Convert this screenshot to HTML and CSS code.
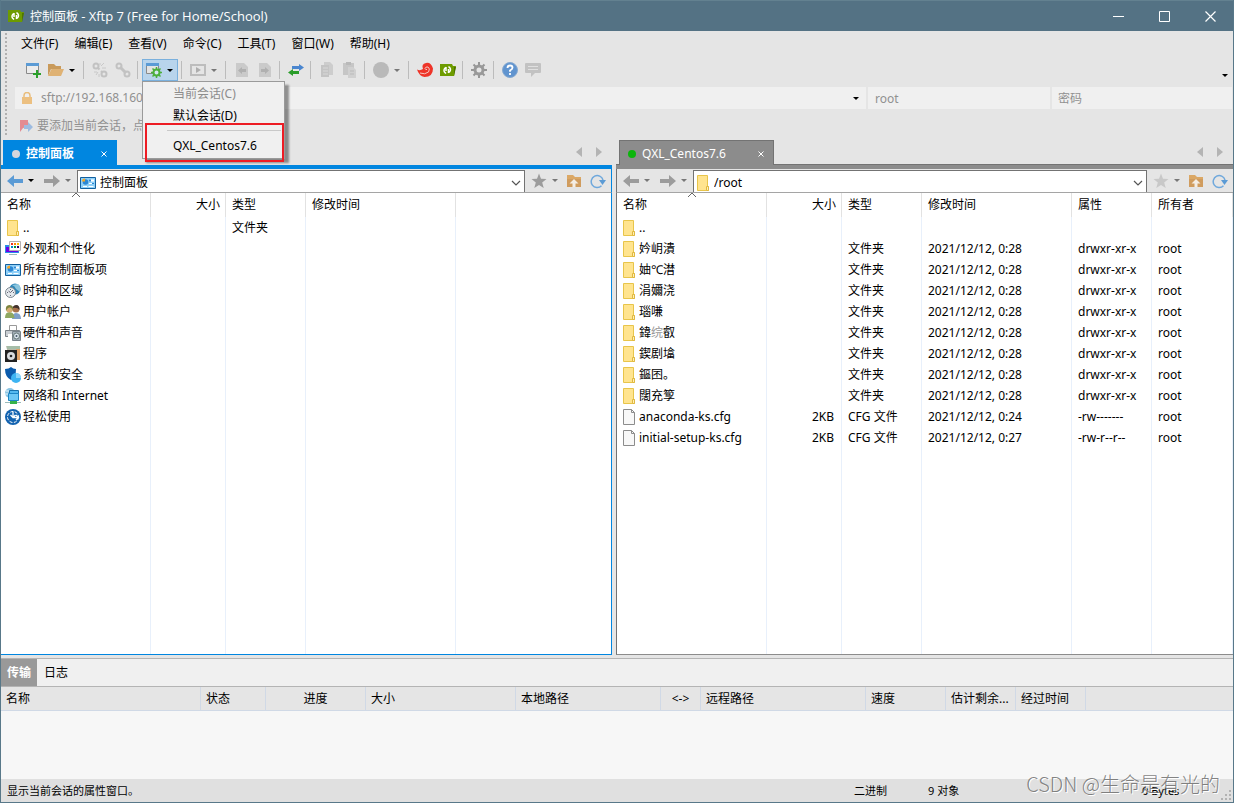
FILE: index.html
```
<!DOCTYPE html>
<html lang="zh-CN">
<head>
<meta charset="utf-8">
<title>控制面板 - Xftp 7 (Free for Home/School)</title>
<link rel="stylesheet" href="styles.css">
</head>
<body>
<svg class="defs" aria-hidden="true">
  <symbol id="folder" viewBox="0 0 14 18"><path d="M1.500 1.500h10v11h1v4h-11z" fill="#ffe48f" stroke="#e8c54a"/><path d="M10.500 12.500h2v4h-2z" fill="#fff0b8" stroke="#e0b840"/></symbol>
  <symbol id="page" viewBox="0 0 14 18"><path d="M1.500 1.500h8l3 3v12h-11z" fill="#f8f8f8" stroke="#8c8c8c"/><path d="M9.500 1.500v3h3" fill="none" stroke="#8c8c8c"/></symbol>
  <symbol id="panel" viewBox="0 0 16 14"><path d="M.5 1.500h15v11H.5z" fill="#8fd0f8" stroke="#12609f"/><circle cx="5.500" cy="6" r="2.800" fill="#2b86d3"/><path d="M5 5.500V2.500a3 3 0 0 0-3 3z" fill="#f6a623"/><path d="M9 3.500h5v2H9zM9 7h5v1H9zM3 10h4v1H3zM8.500 10h5v1h-5z" fill="#fff"/><path d="M9 3.500h2v2H9zM12 7h2v1h-2z" fill="#2b86d3"/></symbol>
  <symbol id="left" viewBox="0 0 16 14"><path d="M0 7l7-6v4h9v4H7v4z" fill="currentColor"/></symbol>
  <symbol id="right" viewBox="0 0 16 14"><path d="M16 7L9 1v4H0v4h9v4z" fill="currentColor"/></symbol>
  <symbol id="down" viewBox="0 0 6 3"><path d="M0 0h6L3 3z" fill="currentColor"/></symbol>
  <symbol id="star" viewBox="0 0 16 16"><path d="M8 .5l2 5.200 5.500.3-4.300 3.500 1.500 5.500L8 12l-4.700 3 1.500-5.500L.5 6 6 5.700z" fill="currentColor"/></symbol>
  <symbol id="upfolder" viewBox="0 0 16 16"><path d="M1 2h6l2 2h6v10H1z" fill="#dba866"/><path d="M1 6h14v8H1z" fill="#d09c5e"/><path d="M8 6l4.500 4.500H9.500V14h-3v-3.500h-3z" fill="#f4ede4"/></symbol>
  <symbol id="refresh" viewBox="0 0 16 16"><path d="M11.500 12.800A6 6 0 1 1 13 7" fill="none" stroke="#6fa8dc" stroke-width="1.500"/><path d="M9 7h7l-3.500 5z" fill="#5b9bd5"/></symbol>
  <symbol id="chev" viewBox="0 0 10 6"><path d="M1 1l4 4 4-4" fill="none" stroke="#555" stroke-width="1.200"/></symbol>
  <symbol id="x" viewBox="0 0 8 8"><path d="M1.500 1.500l5 5m0-5l-5 5" stroke="currentColor" stroke-width="1"/></symbol>
  <symbol id="tril" viewBox="0 0 6 10"><path d="M6 0v10L0 5z" fill="#b4b4b4"/></symbol>
  <symbol id="trir" viewBox="0 0 6 10"><path d="M0 0v10l6-5z" fill="#b4b4b4"/></symbol>
  <symbol id="xftp" viewBox="0 0 16 14"><path d="M0 1h12l1 2h3l-2 10H0z" fill="#6d9b00"/><path d="M14 4h2l-2 9z" fill="#4e7400"/><path d="M6 4.500a3 3 0 0 0-1.500 4.500l1.500 1.500M8.500 3.500l1.500 1.500a3 3 0 0 1-1.500 4.500M6 4v4M8.500 6v4" fill="none" stroke="#fff" stroke-width="1.500"/></symbol>
  <symbol id="grip" viewBox="0 0 10 10"><path d="M8 0h2v2H8zM8 4h2v2H8zM4 4h2v2H4zM8 8h2v2H8zM4 8h2v2H4zM0 8h2v2H0z" fill="#b2b2b2"/></symbol>
</svg>
<div class="window">
  <header class="titlebar">
    <svg class="ico"><use href="#xftp"/></svg>
    <h1 class="title">控制面板 <span class="app">- Xftp 7 (Free for Home/School)</span></h1>
    <button class="winbtn" aria-label="最小化"><svg viewBox="0 0 11 11"><path d="M0 5.500h11" stroke="#fff"/></svg></button>
    <button class="winbtn" aria-label="最大化"><svg viewBox="0 0 11 11"><path d="M.5.500h10v10H.5z" fill="none" stroke="#fff"/></svg></button>
    <button class="winbtn" aria-label="关闭"><svg viewBox="0 0 11 11"><path d="M.5.500l10 10m0-10l-10 10" stroke="#fff" stroke-width="1.200"/></svg></button>
  </header>
  <div class="chrome">
    <nav class="menubar">
      <button>文件(F)</button><button>编辑(E)</button><button>查看(V)</button><button>命令(C)</button><button>工具(T)</button><button>窗口(W)</button><button>帮助(H)</button>
    </nav>
    <div class="toolbar">
      <button class="tool" aria-label="新建"><svg class="ico" viewBox="0 0 16 16"><path d="M1.500 2.500h12v9h-12z" fill="#ececec" stroke="#8a8a8a"/><path d="M1 1h13v3H1z" fill="#5b9bd5"/><path d="M12 8v8M8 12h8" stroke="#2ca02c" stroke-width="2"/></svg></button>
      <button class="tool split" aria-label="打开"><svg class="ico" viewBox="0 0 16 16"><path d="M0 2h6l2 2h5v3H3L0 14z" fill="#c99a5a"/><path d="M3.500 7H16l-3 7H0z" fill="#dfb274"/></svg><svg class="dn"><use href="#down"/></svg></button>
      <i class="sep"></i>
      <button class="tool" aria-label="连接"><svg class="ico" viewBox="0 0 16 16"><g fill="none" stroke="#c2c2c2" stroke-width="2"><circle cx="4" cy="4" r="2.500"/><circle cx="12" cy="12" r="2.500"/><path d="M6 6l1.500 1.500M9 9l1 1"/></g><path d="M9 4l3-3M10 6h4M2 10h3M4 13l2-3M7 15v-3M8 1v2" stroke="#c8c8c8"/></svg></button>
      <button class="tool" aria-label="断开"><svg class="ico" viewBox="0 0 16 16"><g fill="none" stroke="#c2c2c2" stroke-width="2"><circle cx="4" cy="4" r="2.500"/><circle cx="12" cy="12" r="2.500"/><path d="M5 5l6 6" stroke-width="3"/></g></svg></button>
      <i class="sep"></i>
      <div class="dropwrap">
        <button class="tool split on" aria-label="属性" aria-expanded="true"><svg class="ico" viewBox="0 0 16 16"><path d="M.5 2.500h12v9H.5z" fill="#e3e3e3" stroke="#8a8a8a"/><path d="M0 1h13v3H0z" fill="#5b9bd5"/><path d="M10.500 5v11M5 10.500h11M6.500 6.500l8 8M14.500 6.500l-8 8" stroke="#4caf3c" stroke-width="1.500"/><circle cx="10.500" cy="10.500" r="3" fill="#d5e6f2" stroke="#4caf3c" stroke-width="2"/></svg><svg class="dn"><use href="#down"/></svg></button>
        <div class="dropdown" role="menu">
          <button class="item" role="menuitem" disabled>当前会话(C)</button>
          <button class="item" role="menuitem">默认会话(D)</button>
          <hr class="rule">
          <button class="item" role="menuitem">QXL_Centos7.6</button>
          <div class="marker"></div>
        </div>
      </div>
      <i class="sep"></i>
      <button class="tool split dim" aria-label="运行"><svg class="ico" viewBox="0 0 16 16"><path d="M1 3h14v10H1z" fill="none" stroke="#bdbdbd" stroke-width="2"/><path d="M6 5v6l5-3z" fill="#aeaeae"/></svg><svg class="dn"><use href="#down"/></svg></button>
      <i class="sep"></i>
      <button class="tool" aria-label="向左传输"><svg class="ico" viewBox="0 0 16 16"><path d="M2 1h8l4 4v10H2z" fill="#cacaca"/><path d="M4 8.500l4-3.500v2h4v3H8v2z" fill="#b0b0b0"/></svg></button>
      <button class="tool" aria-label="向右传输"><svg class="ico" viewBox="0 0 16 16"><path d="M2 1h8l4 4v10H2z" fill="#cacaca"/><path d="M12 8.500L8 5v2H4v3h4v2z" fill="#b0b0b0"/></svg></button>
      <i class="sep"></i>
      <button class="tool" aria-label="同步"><svg class="ico" viewBox="0 0 16 16"><path d="M16 5.500L11 2v2H4v3h7v2z" fill="#4a86cf"/><path d="M0 10.500L5 7v2h6v3H5v2z" fill="#2a9d2a"/></svg></button>
      <i class="sep"></i>
      <button class="tool" aria-label="复制"><svg class="ico" viewBox="0 0 16 16"><path d="M5 0h6l3 3v10H5z" fill="#cdcdcd"/><path d="M2 3h8v12H2z" fill="#c4c4c4"/><path d="M4 6h5M4 9h5M4 12h5" stroke="#d8d8d8"/></svg></button>
      <button class="tool" aria-label="粘贴"><svg class="ico" viewBox="0 0 16 16"><path d="M1 1h11v12H1z" fill="#c6c6c6"/><path d="M4 0h5v3H4z" fill="#b9b9b9"/><path d="M6 5h5l3 3v8H6z" fill="#d0d0d0"/><path d="M8 9h4M8 12h4" stroke="#bababa"/></svg></button>
      <i class="sep"></i>
      <button class="tool split dim" aria-label="停止"><svg class="ico" viewBox="0 0 16 16"><circle cx="8" cy="8" r="8" fill="#b9b9b9"/></svg><svg class="dn"><use href="#down"/></svg></button>
      <i class="sep"></i>
      <button class="tool" aria-label="Xshell"><svg class="ico" viewBox="0 0 16 16"><path d="M0 7.500q3 1.500 6-.5Q4 2 9 1t7 5.500Q16 15 7.500 15 2 14 0 7.500z" fill="#ee3428"/><path d="M3 11q5 2 8.500-1 2-3.500-.5-5-2.500-.5-3 1.500.5 1.500 2 1" fill="none" stroke="#f5c6c0"/></svg></button>
      <button class="tool" aria-label="Xftp"><svg class="ico"><use href="#xftp"/></svg></button>
      <i class="sep"></i>
      <button class="tool" aria-label="选项"><svg class="ico" viewBox="0 0 16 16"><path d="M8 0v16M0 8h16M2.500 2.500l11 11M13.500 2.500l-11 11" stroke="#969696" stroke-width="2"/><circle cx="8" cy="8" r="4" fill="#e5e5e5" stroke="#999" stroke-width="3"/></svg></button>
      <i class="sep"></i>
      <button class="tool" aria-label="帮助"><svg class="ico" viewBox="0 0 16 16"><circle cx="8" cy="8" r="7.500" fill="#6094cf" stroke="#86a9d0"/><path d="M5.500 6q0-2.500 2.500-2.500t2.500 2.200Q10.500 7 8 8.500v1.200M8 11v2" fill="none" stroke="#fff" stroke-width="1.800"/></svg></button>
      <button class="tool" aria-label="反馈"><svg class="ico" viewBox="0 0 16 16"><path d="M1 1h14q1 0 1 1v8q0 1-1 1h-5l-4 4v-4H1q-1 0-1-1V2q0-1 1-1z" fill="#c2c2c2"/><path d="M3 4.500h10M3 7.500h10" stroke="#e0e0e0"/></svg></button>
      <button class="more" aria-label="更多"><svg class="dn"><use href="#down"/></svg></button>
    </div>
    <div class="address">
      <div class="field host"><svg class="lock" viewBox="0 0 12 12"><path d="M3 6V3.500a3 3 0 0 1 6 0V6" fill="none" stroke="#e9bd7c" stroke-width="1.500"/><path d="M1 5h10v7H1z" fill="#ecc081"/></svg><input aria-label="地址" value="sftp://192.168.160."><svg class="dn"><use href="#down"/></svg></div>
      <input class="field user" aria-label="用户名" placeholder="root">
      <input class="field pass" type="password" aria-label="密码" placeholder="密码">
    </div>
    <div class="hint"><svg class="flag" viewBox="0 0 14 14"><path d="M1 1h8v7l-5 1-3 4z" fill="#e38b92"/><path d="M5 6h4V3l5 5-5 5v-3H5z" fill="#9dbbe0"/></svg><span>要添加当前会话，点击</span></div>
  </div>
  <main class="panes">
    <section class="pane local">
      <div class="tabs"><div class="tab"><i class="dot"></i><span class="tabname">控制面板</span><button class="close" aria-label="关闭标签"><svg><use href="#x"/></svg></button></div><div class="scrolls"><svg><use href="#tril"/></svg><svg><use href="#trir"/></svg></div></div>
      <div class="nav">
        <div class="hist"><button class="back" aria-label="后退"><svg class="arr"><use href="#left"/></svg><svg class="dn blk"><use href="#down"/></svg></button><button aria-label="前进"><svg class="arr"><use href="#right"/></svg><svg class="dn"><use href="#down"/></svg></button></div>
        <div class="path"><svg class="pi"><use href="#panel"/></svg><input aria-label="本地路径" value="控制面板"><svg class="ch"><use href="#chev"/></svg></div>
        <div class="acts"><button class="fav" aria-label="收藏"><svg class="ico"><use href="#star"/></svg><svg class="dn"><use href="#down"/></svg></button><button aria-label="上级"><svg class="ico"><use href="#upfolder"/></svg></button><button aria-label="刷新"><svg class="ico"><use href="#refresh"/></svg></button></div>
      </div>
      <div class="list">
        <table class="files">
          <colgroup><col class="c-name"><col class="c-size"><col class="c-type"><col class="c-time"><col></colgroup>
          <thead><tr><th>名称<svg class="sort" viewBox="0 0 10 6"><path d="M1 5l4-4 4 4" fill="none" stroke="#666"/></svg></th><th class="num">大小</th><th>类型</th><th>修改时间</th><th></th></tr></thead>
          <tbody>
            <tr class="up"><td><span class="fn"><svg class="fi"><use href="#folder"/></svg>..</span></td><td></td><td>文件夹</td><td></td><td></td></tr>
            <tr><td><span class="fn"><svg class="ico" viewBox="0 0 16 16"><path d="M0 4h14v8H0z" fill="#2a8fe6"/><path d="M1 6h4v4h8v1H1z" fill="#6a00e8"/><path d="M4.500.500h11v9h-11z" fill="#fff" stroke="#b5b0b0"/><path d="M6 2h2v2H6z" fill="#e32"/><path d="M9 2h2v2H9z" fill="#f80"/><path d="M12 2h2v2h-2z" fill="#fb0"/><path d="M6 5h2v2H6z" fill="#08c"/><path d="M9 5h2v2H9z" fill="#093"/><path d="M12 5h2v2h-2z" fill="#306"/><path d="M4 13.500h8" stroke="#9bb"/></svg>外观和个性化</span></td><td></td><td></td><td></td><td></td></tr>
            <tr><td><span class="fn"><svg class="ico"><use href="#panel"/></svg>所有控制面板项</span></td><td></td><td></td><td></td><td></td></tr>
            <tr><td><span class="fn"><svg class="ico" viewBox="0 0 16 16"><circle cx="10" cy="6" r="5.500" fill="#2f86b8"/><path d="M7 2q3 1 4 4l4 3q2-5-2-8z" fill="#8cc5dd"/><circle cx="5.500" cy="9.500" r="5" fill="#e4e9ed" stroke="#7c8790"/><path d="M5.500 9.500L8 7M5.500 9.500L3.500 8M5.500 6v1M5.500 12v1M2 9.500h1M8 9.500h1" stroke="#667"/></svg>时钟和区域</span></td><td></td><td></td><td></td><td></td></tr>
            <tr><td><span class="fn"><svg class="ico" viewBox="0 0 16 16"><path d="M7 15q0-6 4-6 5 0 5 6z" fill="#7f9fc9"/><circle cx="11" cy="5" r="3.500" fill="#a8714c"/><path d="M7.500 4q1-3 4-3t3 5q-2-3-7-2z" fill="#40322d"/><path d="M0 14q0-6 4.500-6t5 6z" fill="#8fa862"/><circle cx="4.500" cy="5" r="3.500" fill="#d5ad73"/><path d="M1 7q-1-6 3.500-6T8 7Q7 3 4 3.500 2 4 1 7z" fill="#7c8440"/></svg>用户帐户</span></td><td></td><td></td><td></td><td></td></tr>
            <tr><td><span class="fn"><svg class="ico" viewBox="0 0 16 16"><path d="M4.500.500h7v5h-7z" fill="#fff" stroke="#999"/><path d="M.5 5.500h14v6H.5z" fill="#c9ced3" stroke="#7b8288"/><path d="M3 9h5v3H3z" fill="#fff"/><path d="M7.500 6.500h8v9h-8z" fill="#a4afb9" stroke="#7a848c"/><circle cx="11.500" cy="11" r="3" fill="#dce5ee" stroke="#677"/><circle cx="11.500" cy="11" r="1" fill="#456"/></svg>硬件和声音</span></td><td></td><td></td><td></td><td></td></tr>
            <tr><td><span class="fn"><svg class="ico" viewBox="0 0 16 16"><path d="M1 0h13l1 14H5z" fill="#b9b9a7"/><path d="M11 3h4v11h-4z" fill="#e0a36a"/><path d="M2 0h13v3H2z" fill="#a5bda8"/><path d="M0 4h12v12H0z" fill="#222"/><circle cx="6" cy="10" r="4" fill="#d9dcdf"/><circle cx="6" cy="10" r="1.300" fill="#222"/></svg>程序</span></td><td></td><td></td><td></td><td></td></tr>
            <tr><td><span class="fn"><svg class="ico" viewBox="0 0 16 16"><path d="M0 2q4 0 6-2 2 2 5 2 0 9-5 11Q0 10 0 2z" fill="#0b5cad"/><circle cx="11" cy="11" r="5" fill="#3db4f2"/><path d="M11 11V6a5 5 0 0 1 5 5z" fill="#8bd6fb"/></svg>系统和安全</span></td><td></td><td></td><td></td><td></td></tr>
            <tr><td><span class="fn"><svg class="ico" viewBox="0 0 16 16"><circle cx="5" cy="5" r="5" fill="#8cc5e3"/><path d="M1 3h8M0 6h9" stroke="#e6f6fd"/><path d="M4.500 2.500h9v7h-9z" fill="#54b9ef" stroke="#1872ac"/><path d="M3.500 5.500h10v7h-10z" fill="#6dc8f5" stroke="#1c86c6"/><path d="M5 13h7v3H5z" fill="#36b24a"/><path d="M0 14.500h5M12 14.500h4" stroke="#9bb"/></svg>网络和 Internet</span></td><td></td><td></td><td></td><td></td></tr>
            <tr><td><span class="fn"><svg class="ico" viewBox="0 0 16 16"><circle cx="8" cy="8" r="8" fill="#1363b0"/><path d="M8 2.500v6M5.500 6L8 8.500 10.500 6M8 8.500h5.500M11 6l2.500 2.500L11 11" fill="none" stroke="#fff" stroke-width="1.300"/><circle cx="8" cy="8" r="5.500" fill="none" stroke="#fff" stroke-dasharray="3 1.500"/></svg>轻松使用</span></td><td></td><td></td><td></td><td></td></tr>
            <tr class="fill"><td></td><td></td><td></td><td></td><td></td></tr>
          </tbody>
        </table>
      </div>
    </section>
    <section class="pane remote">
      <div class="tabs"><div class="tab"><i class="dot"></i><span class="tabname">QXL_Centos7.6</span><button class="close" aria-label="关闭标签"><svg><use href="#x"/></svg></button></div><div class="scrolls"><svg><use href="#tril"/></svg><svg><use href="#trir"/></svg></div></div>
      <div class="nav">
        <div class="hist"><button aria-label="后退"><svg class="arr"><use href="#left"/></svg><svg class="dn"><use href="#down"/></svg></button><button aria-label="前进"><svg class="arr"><use href="#right"/></svg><svg class="dn"><use href="#down"/></svg></button></div>
        <div class="path"><svg class="fi"><use href="#folder"/></svg><input aria-label="远程路径" value="/root"><svg class="ch"><use href="#chev"/></svg></div>
        <div class="acts"><button class="fav" aria-label="收藏"><svg class="ico"><use href="#star"/></svg><svg class="dn blk"><use href="#down"/></svg></button><button aria-label="上级"><svg class="ico"><use href="#upfolder"/></svg></button><button aria-label="刷新"><svg class="ico"><use href="#refresh"/></svg></button></div>
      </div>
      <div class="list">
        <table class="files">
          <colgroup><col class="c-name"><col class="c-size"><col class="c-type"><col class="c-time"><col class="c-attr"><col></colgroup>
          <thead><tr><th>名称<svg class="sort" viewBox="0 0 10 6"><path d="M1 5l4-4 4 4" fill="none" stroke="#666"/></svg></th><th class="num">大小</th><th>类型</th><th>修改时间</th><th>属性</th><th>所有者</th></tr></thead>
          <tbody>
            <tr class="up"><td><span class="fn"><svg class="fi"><use href="#folder"/></svg>..</span></td><td></td><td></td><td></td><td></td><td></td></tr>
            <tr><td><span class="fn"><svg class="fi"><use href="#folder"/></svg>妗岄潰</span></td><td></td><td>文件夹</td><td>2021/12/12, 0:28</td><td>drwxr-xr-x</td><td>root</td></tr>
            <tr><td><span class="fn"><svg class="fi"><use href="#folder"/></svg>妯℃澘</span></td><td></td><td>文件夹</td><td>2021/12/12, 0:28</td><td>drwxr-xr-x</td><td>root</td></tr>
            <tr><td><span class="fn"><svg class="fi"><use href="#folder"/></svg>涓嬭浇</span></td><td></td><td>文件夹</td><td>2021/12/12, 0:28</td><td>drwxr-xr-x</td><td>root</td></tr>
            <tr><td><span class="fn"><svg class="fi"><use href="#folder"/></svg>瑙嗛</span></td><td></td><td>文件夹</td><td>2021/12/12, 0:28</td><td>drwxr-xr-x</td><td>root</td></tr>
            <tr><td><span class="fn"><svg class="fi"><use href="#folder"/></svg><span>鍏<span class="faint">𬘫</span>叡</span></span></td><td></td><td>文件夹</td><td>2021/12/12, 0:28</td><td>drwxr-xr-x</td><td>root</td></tr>
            <tr><td><span class="fn"><svg class="fi"><use href="#folder"/></svg>鍥剧墖</span></td><td></td><td>文件夹</td><td>2021/12/12, 0:28</td><td>drwxr-xr-x</td><td>root</td></tr>
            <tr><td><span class="fn"><svg class="fi"><use href="#folder"/></svg>鏂囨。</span></td><td></td><td>文件夹</td><td>2021/12/12, 0:28</td><td>drwxr-xr-x</td><td>root</td></tr>
            <tr><td><span class="fn"><svg class="fi"><use href="#folder"/></svg>闊充箰</span></td><td></td><td>文件夹</td><td>2021/12/12, 0:28</td><td>drwxr-xr-x</td><td>root</td></tr>
            <tr><td><span class="fn"><svg class="fi"><use href="#page"/></svg>anaconda-ks.cfg</span></td><td class="num">2KB</td><td>CFG 文件</td><td>2021/12/12, 0:24</td><td>-rw-------</td><td>root</td></tr>
            <tr><td><span class="fn"><svg class="fi"><use href="#page"/></svg>initial-setup-ks.cfg</span></td><td class="num">2KB</td><td>CFG 文件</td><td>2021/12/12, 0:27</td><td>-rw-r--r--</td><td>root</td></tr>
            <tr class="fill"><td></td><td></td><td></td><td></td><td></td><td></td></tr>
          </tbody>
        </table>
      </div>
    </section>
  </main>
  <section class="transfer">
    <div class="ttabs"><button class="cur">传输</button><button>日志</button></div>
    <table class="queue">
      <colgroup><col class="q200"><col class="q65"><col class="q100"><col class="q150"><col class="q145"><col class="q40"><col class="q165"><col class="q80"><col class="q70"><col class="q70"><col></colgroup>
      <thead><tr><th>名称</th><th>状态</th><th class="mid">进度</th><th>大小</th><th>本地路径</th><th class="mid">&lt;-&gt;</th><th>远程路径</th><th>速度</th><th>估计剩余...</th><th>经过时间</th><th></th></tr></thead>
    </table>
  </section>
  <footer class="status"><span class="msg">显示当前会话的属性窗口。</span><span class="mode">二进制</span><span class="count">9 对象</span><span class="bytes">0 Bytes</span><svg class="sizer"><use href="#grip"/></svg><span class="mark">CSDN @生命是有光的</span></footer>
</div>
</body>
</html>
```
FILE: styles.css
```
* { box-sizing: border-box; }
html, body { height: 100%; }
body { margin: 0; font: 12px/16px "Noto Sans", "Noto Sans CJK SC", sans-serif; color: #000; }
button, input { font: inherit; color: inherit; background: none; border: 0; padding: 0; margin: 0; outline: 0; }
svg { flex: none; display: block; }
.defs { position: absolute; width: 0; height: 0; }
.ico { width: 16px; height: 16px; }
.dn { width: 6px; height: 3px; }
.window { height: 100vh; display: flex; flex-direction: column; background: #e5e5e5; border: solid #587889; border-width: 0 1px 1px; overflow: hidden; }

.titlebar { height: 31px; flex: none; display: flex; align-items: center; background: #547284; border-top: 1px solid #638190; color: #fff; padding-left: 7px; }
.title { flex: 1; margin: 0 0 0 6px; font-size: 12px; font-weight: 400; }
.app { font-family: "Open Sans", sans-serif; font-size: 13px; }
.winbtn { width: 46px; height: 30px; display: grid; place-items: center; }
.winbtn svg { width: 11px; height: 11px; }

.chrome { flex: none; position: relative; }
.chrome::before { content: ""; position: absolute; left: 4px; top: 2px; bottom: 2px; width: 2px; background: repeating-linear-gradient(#b0b0b0 0 2px, transparent 2px 4px); }
.menubar { height: 26px; display: flex; align-items: center; padding-left: 12px; }
.menubar button { padding: 0 8px; }
.toolbar { height: 26px; display: flex; align-items: center; padding: 0 5px 0 20px; }
.tool { width: 23px; height: 22px; display: flex; align-items: center; justify-content: center; }
.split { width: 36px; justify-content: flex-start; padding-left: 4px; gap: 5px; }
.dim { color: #777; }
.on { background: #b8d4ec; box-shadow: inset 0 0 0 1px #7ab0dd; }
.sep { width: 1px; height: 18px; margin: 0 4px 0 3px; background: #bcbcbc; }
.more { margin-left: auto; align-self: flex-end; padding-bottom: 6px; }
.dropwrap { position: relative; }
.dropdown { position: absolute; z-index: 5; left: 0; top: 100%; width: 143px; padding: 1px 1px 1px; background: #f0f0f0; border: 1px solid #9a9a9a; box-shadow: 4px 4px 2px rgba(0,0,0,.4); }
.item { display: block; width: 100%; height: 22px; padding-left: 29px; text-align: left; }
.item:disabled { color: #8c8c8c; }
.rule { margin: 3px 2px 4px 23px; border: 0; border-top: 1px solid #c9c9c9; }
.marker { position: absolute; left: 2px; top: 41px; right: 0; bottom: -4px; border: 2px solid #ed1c24; }

.address { display: grid; grid-template-columns: minmax(0, 851fr) minmax(0, 182fr) minmax(0, 180fr); gap: 2px; margin: 4px 1px 0 14px; }
.field { height: 22px; background: #f0f0f0; color: #919191; }
.field::placeholder { color: #919191; opacity: 1; }
.host { display: flex; align-items: center; padding: 0 7px 0 6px; gap: 8px; }
.host input { flex: 1; min-width: 0; }
.host .dn { color: #000; }
.lock { width: 12px; height: 12px; }
.user { padding-left: 7px; }
.pass { padding-left: 6px; }
.hint { height: 29px; display: flex; align-items: center; gap: 4px; padding: 4px 0 0 18px; color: #919191; }
.flag { width: 14px; height: 14px; }

.panes { flex: 1; min-height: 0; display: grid; grid-template-columns: minmax(0, 611fr) minmax(0, 617fr); gap: 4px; }
.pane { min-width: 0; min-height: 0; display: flex; flex-direction: column; }
.tabs { flex: none; height: 31px; display: flex; align-items: flex-end; padding-left: 2px; }
.tab { height: 25px; display: flex; align-items: center; color: #fff; }
.local .tabs { border-bottom: 4px solid #0086e0; }
.local .tab { width: 114px; background: #0086e0; padding: 2px 9px 0 9px; font-weight: 700; }
.remote .tabs { padding-left: 3px; border-bottom: 4px solid #8c8c8c; box-shadow: inset 0 -1px #737373; }
.remote .tab { width: 155px; background: #8c8c8c; border: 1px solid #737373; border-bottom: 0; padding: 2px 8px 0; }
.dot { width: 8px; height: 8px; border-radius: 50%; background: #d5d5dc; }
.remote .dot { background: #0bb50b; }
.tabname { flex: 1; margin-left: 6px; }
.close svg { width: 8px; height: 8px; }
.scrolls { margin-left: auto; display: flex; gap: 14px; padding: 0 10px 8px 0; }
.scrolls svg { width: 6px; height: 10px; }

.nav { flex: none; height: 24px; display: flex; border-bottom: 1px solid #a5a5a5; }
.hist { width: 76px; display: flex; align-items: center; padding-left: 6px; gap: 6px; color: #9c9c9c; }
.hist button, .fav { display: flex; align-items: center; gap: 5px; }
.hist button { width: 31px; }
.hist .dn { color: #777; }
.arr { width: 16px; height: 14px; }
.back { color: #5b9bd5; }
.hist .blk, .fav .blk { color: #000; }
.path { flex: 1; min-width: 0; margin-top: 1px; display: flex; align-items: center; background: #fff; border: solid #737373; border-width: 1px 1px 0; padding: 3px 3px 0 2px; gap: 4px; }
.path input { flex: 1; min-width: 0; }
.pi { width: 16px; height: 14px; }
.ch { width: 10px; height: 6px; }
.acts { width: 86px; display: flex; align-items: center; padding-left: 6px; gap: 8px; }
.fav { color: #9c9c9c; }
.fav .dn { color: #777; }
.remote .fav { color: #c8c8c8; }
.local .nav, .local .list { border-right: 1px solid #0086e0; }
.local .list { border-bottom: 1px solid #0086e0; }
.remote .nav, .remote .list { border-left: 1px solid #737373; }
.remote .list { border-bottom: 1px solid #8c8c8c; }
.list { flex: 1; min-height: 0; background: #fff; }

table { border-collapse: separate; border-spacing: 0; table-layout: fixed; width: 100%; }
th { font-weight: 400; text-align: left; }
.files { height: 100%; }
.files th, .files td { padding: 0 6px; white-space: nowrap; border-right: 1px solid #e8f0fb; }
.files th { height: 24px; position: relative; border-right-color: #e2e2e2; padding: 0 5px 0 6px; }
.files td { height: 21px; padding-right: 7px; }
.local th:last-child, .local td:last-child { border-right: 0; }
.files td:first-child { padding: 0 0 0 4px; }
.files .fill td { height: auto; }
.files .num { text-align: right; }
.c-name, .c-time { width: 150px; }
.c-size { width: 75px; }
.c-type, .c-attr { width: 80px; }
.sort { position: absolute; left: 50%; top: -1px; width: 10px; height: 6px; margin-left: -5px; }
.fn { display: flex; align-items: center; gap: 2px; }
.fi { width: 14px; height: 18px; }
.remote .files td:first-child, .files .up td:first-child { padding-left: 5px; }
.files .up .fn, .remote .fn { gap: 3px; }
.faint { color: #999; }

.transfer { flex: none; height: 121px; margin-top: 3px; border-top: 1px solid #b4b4b4; background: #f7f7f7; }
.ttabs { display: flex; height: 28px; background: #f0f0f0; border-bottom: 1px solid #b4b4b4; }
.ttabs button { padding: 0 7px; }
.ttabs .cur { padding: 0 6px; background: #999; color: #fff; font-weight: 700; }
.queue th { height: 24px; padding: 0 5px; white-space: nowrap; background: #e5e5e5; border-right: 1px solid #d0d9e6; border-bottom: 1px solid #d0d9e6; }
.queue th:last-child { border-right: 0; }
.queue .mid { text-align: center; }
.q200 { width: 200px; } .q65 { width: 65px; } .q100 { width: 100px; } .q150 { width: 150px; } .q145 { width: 145px; }
.q40 { width: 40px; } .q165 { width: 165px; } .q80 { width: 80px; } .q70 { width: 70px; }

.status { flex: none; height: 23px; position: relative; display: flex; align-items: center; padding-left: 6px; background: #e0e0e0; font-size: 11px; }
.msg { flex: 1; }
.mode { width: 74px; }
.count { width: 214px; }
.bytes { width: 79px; }
.sizer { width: 10px; height: 10px; align-self: flex-end; margin: 0 2px 2px 0; }
.mark { position: absolute; right: 13px; bottom: 3px; font: 20px/30px "Noto Sans CJK SC", sans-serif; font-weight: 300; color: rgba(110,110,110,.85); text-shadow: 1px 1px #fff; }
```
